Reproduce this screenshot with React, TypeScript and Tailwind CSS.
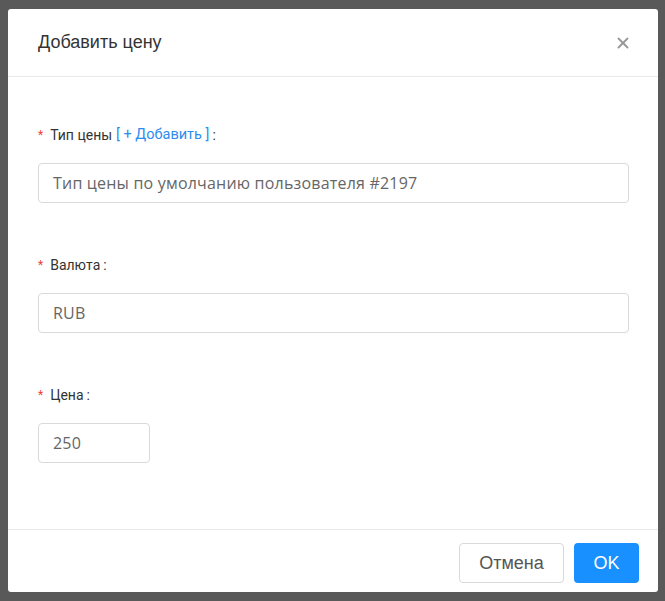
import { X } from "lucide-react";

function Label({ children }: { children: React.ReactNode }) {
  return (
    <div className="flex h-5 items-center text-[14px] text-[#333]">
      <span className="mr-[7px] text-[12px] text-[#f04134]">*</span>
      {children}
    </div>
  );
}

const inputCls =
  "mt-[18px] flex h-10 items-center rounded-[4px] border border-[#d9d9d9] px-[14px] text-[16px] tracking-[0.2px] text-[#666] font-['Open_Sans',sans-serif]";

export default function App() {
  return (
    <div
      className="h-[601px] w-[665px] bg-[#595959] pt-[9px] pl-2"
      style={{ fontFamily: "Roboto, 'Liberation Sans', sans-serif" }}
    >
      <div className="flex h-[583px] w-[650px] flex-col rounded-[3px] bg-white">
        {/* Header */}
        <div className="flex h-[68px] items-center justify-between border-b border-[#e9e9e9] pl-[30px] pr-[26px]">
          <span className="font-['Liberation_Sans',sans-serif] text-[18px] text-[#333]">Добавить цену</span>
          <X className="h-[18px] w-[18px] text-[#999]" strokeWidth={2.5} />
        </div>

        {/* Body */}
        <div className="flex-1 px-[30px] pt-[48px]">
          <Label>
            Тип цены
            <span className="ml-1 text-[14.5px] text-[#2d8cf0]">[ + Добавить ]</span>
            <span className="ml-[3px]">:</span>
          </Label>
          <div className={`${inputCls} w-[591px]`}>Тип цены по умолчанию пользователя #2197</div>

          <div className="mt-[52px]">
            <Label>
              Валюта<span className="ml-[3px]">:</span>
            </Label>
          </div>
          <div className={`${inputCls} w-[591px]`}>RUB</div>

          <div className="mt-[52px]">
            <Label>
              Цена<span className="ml-[3px]">:</span>
            </Label>
          </div>
          <div className={`${inputCls} w-[112px]`}>250</div>
        </div>

        {/* Footer */}
        <div className="flex h-[63px] items-start justify-end gap-[10px] border-t border-[#e9e9e9] pr-[19px] pt-[13px] font-['Liberation_Sans',sans-serif]">
          <button className="h-10 w-[105px] rounded-[4px] border border-[#d9d9d9] bg-white text-[18px] text-[#555]">
            Отмена
          </button>
          <button className="h-10 w-[65px] rounded-[4px] bg-[#1890ff] text-[18px] text-white">
            OK
          </button>
        </div>
      </div>
    </div>
  );
}
